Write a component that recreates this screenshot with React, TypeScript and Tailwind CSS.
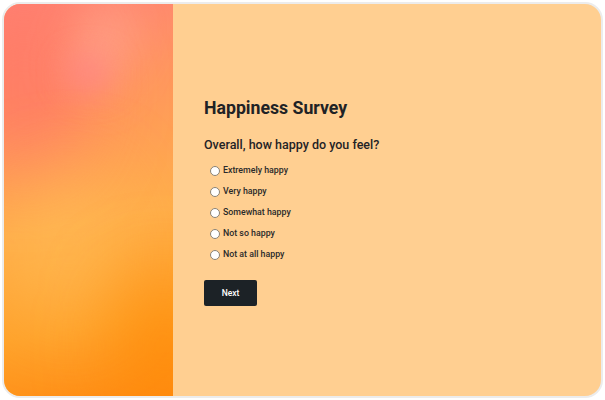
import React from 'react';

const options = ['Extremely happy', 'Very happy', 'Somewhat happy', 'Not so happy', 'Not at all happy'];

export default function App() {
  return (
    <div className="h-[400px] w-[605px] bg-white p-[2px] font-['Roboto',sans-serif]">
      <div className="flex h-full w-full overflow-hidden rounded-[18px] border-2 border-[#ececec] bg-[#ffcf91]">
        {/* gradient side panel */}
        <div className="relative h-full w-[169px] shrink-0 overflow-hidden bg-[linear-gradient(170deg,#ff8472_0%,#ff985c_25%,#ffae4a_55%,#ffa22a_80%,#ff8c14_100%)]">
          <div className="absolute -left-10 top-0 h-[170px] w-[120px] rounded-full bg-[#ff6a6a]/60 blur-2xl" />
          <div className="absolute left-[80px] top-[0px] h-[80px] w-[40px] rotate-[25deg] rounded-full bg-[#ffb0a0]/70 blur-xl" />
          <div className="absolute left-[65px] top-[55px] h-[30px] w-[40px] rounded-full bg-[#ff7f8e]/70 blur-lg" />
          <div className="absolute left-[20px] top-[170px] h-[150px] w-[90px] rounded-full bg-[#ffc05a]/60 blur-2xl" />
          <div className="absolute right-[-30px] bottom-[-20px] h-[140px] w-[80px] rounded-full bg-[#ff8800]/70 blur-2xl" />
        </div>

        {/* survey content */}
        <div className="flex flex-col pl-[31px] pt-[92px] text-[#1f2326]">
          <h1 className="text-[17.7px] font-bold leading-[24px]">Happiness Survey</h1>
          <p className="mt-[16px] text-[12.5px] font-medium leading-[18px]">Overall, how happy do you feel?</p>

          <div className="mt-[10px] flex flex-col gap-[7px] pl-[6px]">
            {options.map((o) => (
              <label key={o} className="flex h-[14px] items-center gap-[3px]">
                <span className="h-[10px] w-[10px] rounded-full border border-[#8a8275] bg-white" />
                <span className="text-[8.8px] font-medium text-[#2a2a2a]">{o}</span>
              </label>
            ))}
          </div>

          <button className="mt-[18px] flex h-[26px] w-[53px] items-center justify-center rounded-[2px] bg-[#1c2226] text-[8.5px] font-medium text-white">
            Next
          </button>
        </div>
      </div>
    </div>
  );
}
